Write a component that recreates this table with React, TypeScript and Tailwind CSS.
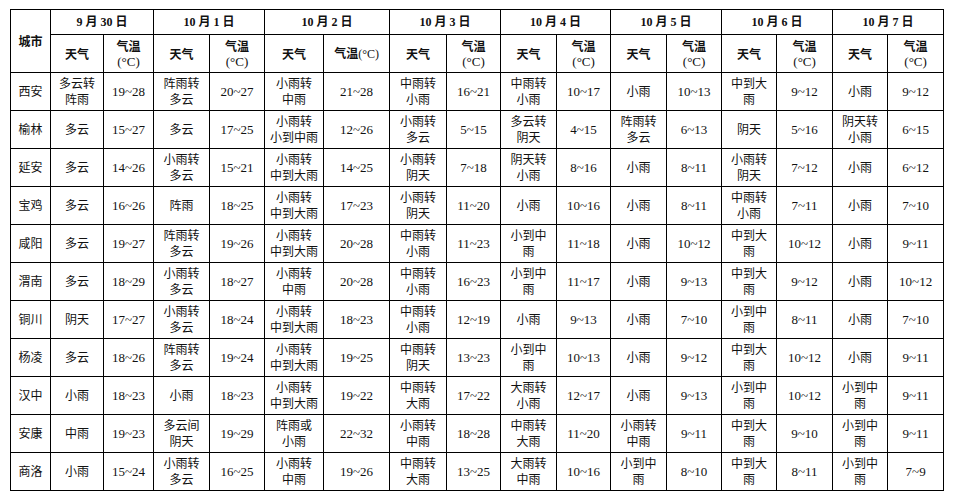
import React from 'react';

type Day = { date: string, tempInline?: boolean };

const days: Day[] = [
    { date: '9 月 30 日' },
    { date: '10 月 1 日' },
    { date: '10 月 2 日', tempInline: true },
    { date: '10 月 3 日' },
    { date: '10 月 4 日' },
    { date: '10 月 5 日' },
    { date: '10 月 6 日' },
    { date: '10 月 7 日' },
];

// widths taken from the grid lines, city column first
const colWidths = [40, 53, 50, 56, 55, 59, 66, 57, 54, 56, 54, 56, 55, 55, 56, 55, 56];

// weather text uses "|" for a line break, temps follow each weather cell
const rows: Array<{ city: string, cells: string[] }> = [
    { city: '西安', cells: ['多云转|阵雨', '19~28', '阵雨转|多云', '20~27', '小雨转|中雨', '21~28', '中雨转|小雨', '16~21', '中雨转|小雨', '10~17', '小雨', '10~13', '中到大|雨', '9~12', '小雨', '9~12'] },
    { city: '榆林', cells: ['多云', '15~27', '多云', '17~25', '小雨转|小到中雨', '12~26', '小雨转|多云', '5~15', '多云转|阴天', '4~15', '阵雨转|多云', '6~13', '阴天', '5~16', '阴天转|小雨', '6~15'] },
    { city: '延安', cells: ['多云', '14~26', '小雨转|多云', '15~21', '小雨转|中到大雨', '14~25', '小雨转|阴天', '7~18', '阴天转|小雨', '8~16', '小雨', '8~11', '小雨转|阴天', '7~12', '小雨', '6~12'] },
    { city: '宝鸡', cells: ['多云', '16~26', '阵雨', '18~25', '小雨转|中到大雨', '17~23', '小雨转|阴天', '11~20', '小雨', '10~16', '小雨', '8~11', '中雨转|小雨', '7~11', '小雨', '7~10'] },
    { city: '咸阳', cells: ['多云', '19~27', '阵雨转|多云', '19~26', '小雨转|中到大雨', '20~28', '中雨转|小雨', '11~23', '小到中|雨', '11~18', '小雨', '10~12', '中到大|雨', '10~12', '小雨', '9~11'] },
    { city: '渭南', cells: ['多云', '18~29', '小雨转|多云', '18~27', '小雨转|中雨', '20~28', '中雨转|小雨', '16~23', '小到中|雨', '11~17', '小雨', '9~13', '中到大|雨', '9~12', '小雨', '10~12'] },
    { city: '铜川', cells: ['阴天', '17~27', '小雨转|多云', '18~24', '小雨转|中到大雨', '18~23', '中雨转|小雨', '12~19', '小雨', '9~13', '小雨', '7~10', '小到中|雨', '8~11', '小雨', '7~10'] },
    { city: '杨凌', cells: ['多云', '18~26', '阵雨转|多云', '19~24', '小雨转|中到大雨', '19~25', '中雨转|阴天', '13~23', '小到中|雨', '10~13', '小雨', '9~12', '中到大|雨', '10~12', '小雨', '9~11'] },
    { city: '汉中', cells: ['小雨', '18~23', '小雨', '18~23', '小雨转|中到大雨', '19~22', '中雨转|大雨', '17~22', '大雨转|小雨', '12~17', '小雨', '9~13', '小到中|雨', '10~12', '小到中|雨', '9~11'] },
    { city: '安康', cells: ['中雨', '19~23', '多云间|阴天', '19~29', '阵雨或|小雨', '22~32', '小雨转|中雨', '18~28', '中雨转|大雨', '11~20', '小雨转|中雨', '9~11', '中到大|雨', '9~10', '小到中|雨', '9~11'] },
    { city: '商洛', cells: ['小雨', '15~24', '小雨转|多云', '16~25', '小雨转|中雨', '19~26', '中雨转|大雨', '13~25', '大雨转|中雨', '10~16', '小到中|雨', '8~10', '中到大|雨', '8~11', '小到中|雨', '7~9'] },
];

const Lines: React.FC<{ text: string }> = ({ text }) => (
    <>
        {text.split('|').map((line, i) => (
            <div key={i}>{line}</div>
        ))}
    </>
)

function App() {
    return (
        <div className="w-[958px] h-[496px] bg-white pl-[10px] pt-[9px] text-[#111] font-['Liberation_Serif','Noto_Sans_CJK_SC',serif]">
            <table className="table-fixed border-collapse w-[934px] text-[12px] leading-[16px]">
                <colgroup>
                    {colWidths.map((w, i) => (
                        <col key={i} style={{ width: w }} />
                    ))}
                </colgroup>
                <thead>
                    <tr className="h-[25px]">
                        <th rowSpan={2} className="border border-black font-bold text-center align-middle font-['Noto_Sans_CJK_SC',sans-serif]">
                            城市
                        </th>
                        {days.map((d) => (
                            <th key={d.date} colSpan={2} className="border border-black font-bold text-center align-middle whitespace-pre">
                                {d.date}
                            </th>
                        ))}
                    </tr>
                    <tr className="h-[38px]">
                        {days.map((d) => (
                            <React.Fragment key={d.date}>
                                <th className="border border-black font-bold text-center align-middle font-['Noto_Sans_CJK_SC',sans-serif]">
                                    天气
                                </th>
                                <th className="border border-black font-normal text-center align-middle">
                                    {d.tempInline ? (
                                        <span><b className="font-['Noto_Sans_CJK_SC',sans-serif]">气温</b>(°C)</span>
                                    ) : (
                                        <>
                                            <div className="font-bold font-['Noto_Sans_CJK_SC',sans-serif]">气温</div>
                                            <div className="text-[13px]">(°C)</div>
                                        </>
                                    )}
                                </th>
                            </React.Fragment>
                        ))}
                    </tr>
                </thead>
                <tbody>
                    {rows.map((r) => (
                        <tr key={r.city} className="h-[38px]">
                            <td className="border border-black text-center align-middle">{r.city}</td>
                            {r.cells.map((c, i) => (
                                <td key={i} className={i % 2 === 0 ? "border border-black text-center align-middle" : "border border-black text-center align-middle text-[13px]"}>
                                    <Lines text={c} />
                                </td>
                            ))}
                        </tr>
                    ))}
                </tbody>
            </table>
        </div>
    )
}

export default App
